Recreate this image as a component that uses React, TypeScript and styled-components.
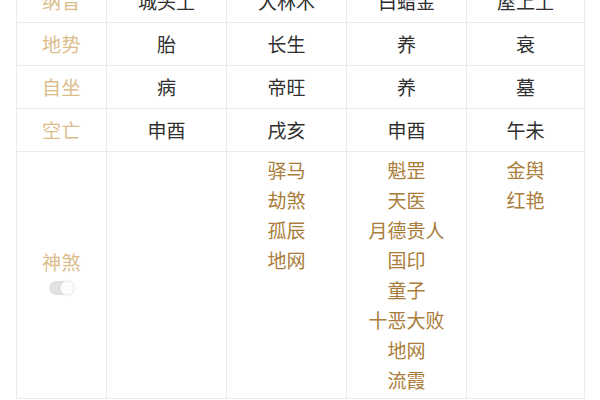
import React from "react";
import styled, { createGlobalStyle } from "styled-components";

const GlobalStyle = createGlobalStyle`
  html, body { margin: 0; padding: 0; background: #ffffff; }
  body {
    font-family: "Noto Sans CJK SC", "Noto Sans", sans-serif;
    overflow: hidden;
  }
`;

const Page = styled.div`
  width: 600px;
  height: 400px;
  overflow: hidden;
  padding: 0 16px;
  box-sizing: border-box;
  background: #fff;
`;

const Grid = styled.div`
  display: grid;
  grid-template-columns: 90px 120px 120px 120px 118px;
  margin-top: -21px;
  border-left: 1px solid #ebebeb;
  border-top: 1px solid #ebebeb;
`;

const Cell = styled.div<{ $tall?: boolean }>`
  box-sizing: content-box;
  border-right: 1px solid #ebebeb;
  border-bottom: 1px solid #ebebeb;
  min-height: ${(p) => (p.$tall ? "0" : "42px")};
  display: flex;
  flex-direction: column;
  align-items: center;
  justify-content: ${(p) => (p.$tall ? "flex-start" : "center")};
  padding: ${(p) => (p.$tall ? "3px 0 3px" : "0")};
  font-size: 19px;
  line-height: 30px;
  color: #2f2f2f;
`;

const LabelCell = styled(Cell)`
  justify-content: center;
  color: #dbbd8a;
  padding-bottom: ${(p) => (p.$tall ? "12px" : "0")};
`;

const LabelText = styled.span`
  color: #dbbd8a;
  letter-spacing: 0.5px;
`;

const Sha = styled.span`
  color: #a97d3b;
  line-height: 30px;
`;

const Toggle = styled.span`
  position: relative;
  display: block;
  width: 25px;
  height: 14px;
  margin-top: 4px;
  border-radius: 7px;
  background: #e2e2e2;
`;

const Knob = styled.span`
  position: absolute;
  right: 0;
  top: 0;
  width: 14px;
  height: 14px;
  border-radius: 50%;
  background: #fbfbfb;
  box-shadow: 0 0 2px rgba(0, 0, 0, 0.18);
`;

const rows: { label: string; values: string[] }[] = [
  { label: "纳音", values: ["城头土", "大林木", "白蜡金", "屋上土"] },
  { label: "地势", values: ["胎", "长生", "养", "衰"] },
  { label: "自坐", values: ["病", "帝旺", "养", "墓"] },
  { label: "空亡", values: ["申酉", "戌亥", "申酉", "午未"] },
];

const shensha: string[][] = [
  [],
  ["驿马", "劫煞", "孤辰", "地网"],
  ["魁罡", "天医", "月德贵人", "国印", "童子", "十恶大败", "地网", "流霞"],
  ["金舆", "红艳"],
];

export default function App() {
  return (
    <>
      <GlobalStyle />
      <Page>
        <Grid>
          {rows.map((r) => (
            <React.Fragment key={r.label}>
              <LabelCell>
                <LabelText>{r.label}</LabelText>
              </LabelCell>
              {r.values.map((v, i) => (
                <Cell key={i}>{v}</Cell>
              ))}
            </React.Fragment>
          ))}
          <LabelCell $tall>
            <LabelText>神煞</LabelText>
            <Toggle>
              <Knob />
            </Toggle>
          </LabelCell>
          {shensha.map((list, i) => (
            <Cell $tall key={i}>
              {list.map((s, j) => (
                <Sha key={j}>{s}</Sha>
              ))}
            </Cell>
          ))}
        </Grid>
      </Page>
    </>
  );
}
